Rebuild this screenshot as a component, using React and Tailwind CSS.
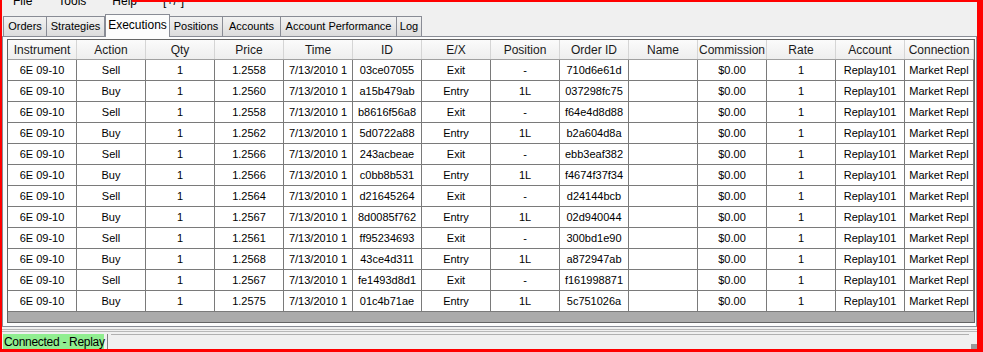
import React from 'react';

const columns = [
  'Instrument', 'Action', 'Qty', 'Price', 'Time', 'ID', 'E/X', 'Position',
  'Order ID', 'Name', 'Commission', 'Rate', 'Account', 'Connection',
];

const executions = [
  ['Sell', '1.2558', '03ce07055', '710d6e61d'],
  ['Buy', '1.2560', 'a15b479ab', '037298fc75'],
  ['Sell', '1.2558', 'b8616f56a8', 'f64e4d8d88'],
  ['Buy', '1.2562', '5d0722a88', 'b2a604d8a'],
  ['Sell', '1.2566', '243acbeae', 'ebb3eaf382'],
  ['Buy', '1.2566', 'c0bb8b531', 'f4674f37f34'],
  ['Sell', '1.2564', 'd21645264', 'd24144bcb'],
  ['Buy', '1.2567', '8d0085f762', '02d940044'],
  ['Sell', '1.2561', 'ff95234693', '300bd1e90'],
  ['Buy', '1.2568', '43ce4d311', 'a872947ab'],
  ['Sell', '1.2567', 'fe1493d8d1', 'f161998871'],
  ['Buy', '1.2575', '01c4b71ae', '5c751026a'],
];

const tabs = [
  { label: 'Orders', w: 'w-[44px]' },
  { label: 'Strategies', w: 'w-[58px]' },
  { label: 'Executions', w: 'w-[65px]', active: true },
  { label: 'Positions', w: 'w-[53px]' },
  { label: 'Accounts', w: 'w-[58px]' },
  { label: 'Account Performance', w: 'w-[116px]' },
  { label: 'Log', w: 'w-[25px]' },
];

function toCells(r) {
  const [action, price, id, orderId] = r;
  const entry = action === 'Buy';
  return [
    '6E 09-10', action, '1', price, '7/13/2010 1', id,
    entry ? 'Entry' : 'Exit', entry ? '1L' : '-', orderId, '',
    '$0.00', '1', 'Replay101', 'Market Repl',
  ];
}

export default function App() {
  return (
    <div className="w-[983px] h-[352px] bg-[#f0f0f0] border-l-2 border-r-[6px] border-b-[3px] border-[#ff0000] flex flex-col overflow-hidden text-[11px] text-black whitespace-nowrap" style={{ fontFamily: '"Liberation Sans", Arial, sans-serif' }}>
      {/* menu bar, cut off at the top */}
      <div className="relative h-[13px] shrink-0 overflow-hidden">
        <div className="flex gap-[26px] pl-[11px] -mt-[6px] leading-[14px] text-[12px]">
          <span>File</span>
          <span>Tools</span>
          <span>Help</span>
          <span>[+/-]</span>
        </div>
        <div className="absolute top-0 left-[130px] right-0 h-[2px] bg-[#ff0000]" />
      </div>

      {/* tab strip */}
      <div className="h-[24px] shrink-0 flex items-end pl-[1px] border-b border-[#898c95]">
        {tabs.map((t) =>
          t.active ? (
            <div key={t.label} className={`${t.w} h-[23px] -mb-px bg-[#fcfcfc] border border-b-0 border-[#898c95] flex items-center justify-center pb-[3px] text-[12px]`}>
              {t.label}
            </div>
          ) : (
            <div key={t.label} className={`${t.w} h-[20px] bg-gradient-to-b from-[#f2f2f2] to-[#dcdcdc] border border-l-0 first:border-l border-b-0 border-[#898c95] flex items-center justify-center`}>
              {t.label}
            </div>
          )
        )}
      </div>

      {/* panel with grid */}
      <div className="h-[290px] shrink-0 bg-[#fcfcfc] border-x border-b border-[#898c95] pt-[2px] pl-[4px]">
        <div className="w-[968px] h-[284px] border border-[#646464] bg-[#ababab] flex flex-col">
          <div className="flex h-[20px] bg-gradient-to-b from-[#fbfbfb] to-[#eeeeee] border-b border-[#a0a0a0]">
            {columns.map((c) => (
              <div key={c} className="w-[69px] shrink-0 border-r border-[#d5d5d5] flex items-center justify-center text-[12px] text-[#1a1a1a] overflow-hidden">
                {c}
              </div>
            ))}
          </div>
          {executions.map((r, i) => (
            <div key={i} className="flex h-[21px] bg-white border-b border-[#7a7a7a]">
              {toCells(r).map((v, j) => (
                <div key={j} className="w-[69px] shrink-0 border-r border-[#7a7a7a] flex items-center justify-center overflow-hidden">
                  {v}
                </div>
              ))}
            </div>
          ))}
        </div>
      </div>

      {/* status bar */}
      <div className="flex-1 border-t-[3px] border-double border-[#b8b8b8] mt-[2px] pt-[2px] pl-[1px] flex gap-[3px]">
        <div className="w-[101px] h-[16px] bg-[#90ee90] flex items-center pl-[1px] leading-none text-[12px] tracking-[-0.3px]">Connected - Replay</div>
        <div className="w-px h-[16px] bg-[#808080]" />
        <div className="flex-1 h-[16px] border-t border-[#b0b0b0] mr-[8px] relative">
          <div className="absolute right-[-8px] bottom-0 w-[6px] h-[6px] bg-[radial-gradient(#9a9a9a_1px,transparent_1px)] bg-[length:2px_2px]" />
        </div>
      </div>
    </div>
  );
}
